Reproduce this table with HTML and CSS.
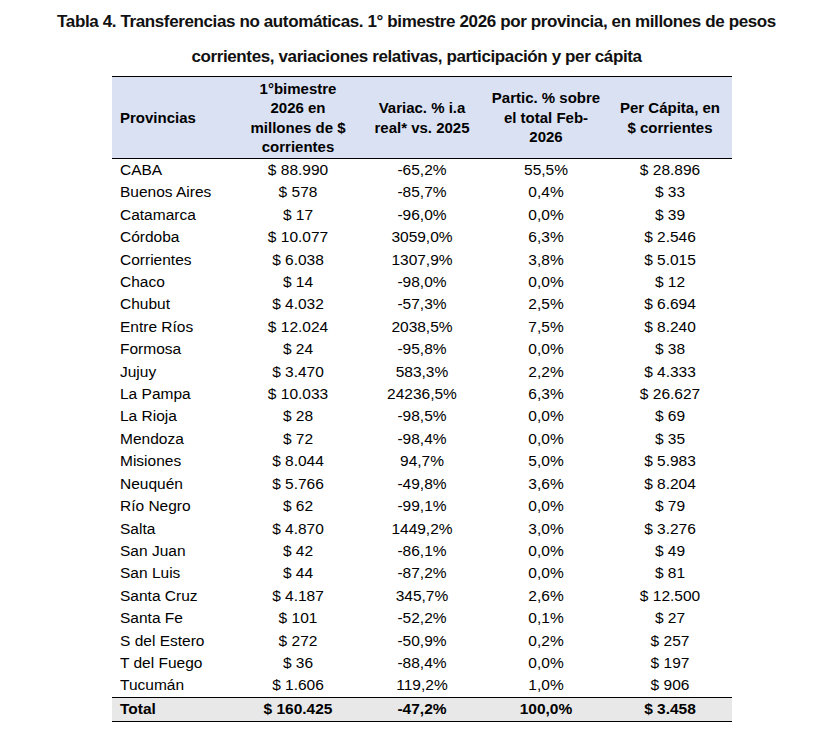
FILE: index.html
```html
<!DOCTYPE html>
<html lang="es">
<head>
<meta charset="utf-8">
<title>Tabla 4</title>
<link rel="stylesheet" href="styles.css">
</head>
<body>
<h1 class="title">Tabla 4. Transferencias no automáticas. 1° bimestre 2026 por provincia, en millones de pesos<br>corrientes, variaciones relativas, participación y per cápita</h1>
<table class="data">
<colgroup>
<col class="c-prov"><col><col><col><col>
</colgroup>
<thead>
<tr>
<th class="prov">Provincias</th>
<th>1°bimestre<br>2026 en<br>millones de $<br>corrientes</th>
<th>Variac. % i.a<br>real* vs. 2025</th>
<th>Partic. % sobre<br>el total Feb-<br>2026</th>
<th>Per Cápita, en<br>$ corrientes</th>
</tr>
</thead>
<tbody>
<tr><td class="prov">CABA</td><td>$ 88.990</td><td>-65,2%</td><td>55,5%</td><td>$ 28.896</td></tr>
<tr><td class="prov">Buenos Aires</td><td>$ 578</td><td>-85,7%</td><td>0,4%</td><td>$ 33</td></tr>
<tr><td class="prov">Catamarca</td><td>$ 17</td><td>-96,0%</td><td>0,0%</td><td>$ 39</td></tr>
<tr><td class="prov">Córdoba</td><td>$ 10.077</td><td>3059,0%</td><td>6,3%</td><td>$ 2.546</td></tr>
<tr><td class="prov">Corrientes</td><td>$ 6.038</td><td>1307,9%</td><td>3,8%</td><td>$ 5.015</td></tr>
<tr><td class="prov">Chaco</td><td>$ 14</td><td>-98,0%</td><td>0,0%</td><td>$ 12</td></tr>
<tr><td class="prov">Chubut</td><td>$ 4.032</td><td>-57,3%</td><td>2,5%</td><td>$ 6.694</td></tr>
<tr><td class="prov">Entre Ríos</td><td>$ 12.024</td><td>2038,5%</td><td>7,5%</td><td>$ 8.240</td></tr>
<tr><td class="prov">Formosa</td><td>$ 24</td><td>-95,8%</td><td>0,0%</td><td>$ 38</td></tr>
<tr><td class="prov">Jujuy</td><td>$ 3.470</td><td>583,3%</td><td>2,2%</td><td>$ 4.333</td></tr>
<tr><td class="prov">La Pampa</td><td>$ 10.033</td><td>24236,5%</td><td>6,3%</td><td>$ 26.627</td></tr>
<tr><td class="prov">La Rioja</td><td>$ 28</td><td>-98,5%</td><td>0,0%</td><td>$ 69</td></tr>
<tr><td class="prov">Mendoza</td><td>$ 72</td><td>-98,4%</td><td>0,0%</td><td>$ 35</td></tr>
<tr><td class="prov">Misiones</td><td>$ 8.044</td><td>94,7%</td><td>5,0%</td><td>$ 5.983</td></tr>
<tr><td class="prov">Neuquén</td><td>$ 5.766</td><td>-49,8%</td><td>3,6%</td><td>$ 8.204</td></tr>
<tr><td class="prov">Río Negro</td><td>$ 62</td><td>-99,1%</td><td>0,0%</td><td>$ 79</td></tr>
<tr><td class="prov">Salta</td><td>$ 4.870</td><td>1449,2%</td><td>3,0%</td><td>$ 3.276</td></tr>
<tr><td class="prov">San Juan</td><td>$ 42</td><td>-86,1%</td><td>0,0%</td><td>$ 49</td></tr>
<tr><td class="prov">San Luis</td><td>$ 44</td><td>-87,2%</td><td>0,0%</td><td>$ 81</td></tr>
<tr><td class="prov">Santa Cruz</td><td>$ 4.187</td><td>345,7%</td><td>2,6%</td><td>$ 12.500</td></tr>
<tr><td class="prov">Santa Fe</td><td>$ 101</td><td>-52,2%</td><td>0,1%</td><td>$ 27</td></tr>
<tr><td class="prov">S del Estero</td><td>$ 272</td><td>-50,9%</td><td>0,2%</td><td>$ 257</td></tr>
<tr><td class="prov">T del Fuego</td><td>$ 36</td><td>-88,4%</td><td>0,0%</td><td>$ 197</td></tr>
<tr><td class="prov">Tucumán</td><td>$ 1.606</td><td>119,2%</td><td>1,0%</td><td>$ 906</td></tr>
</tbody>
<tfoot>
<tr><td class="prov">Total</td><td>$ 160.425</td><td>-47,2%</td><td>100,0%</td><td>$ 3.458</td></tr>
</tfoot>
</table>
</body>
</html>
```
FILE: styles.css
```css
html, body {
  margin: 0;
  padding: 0;
  background: #ffffff;
}
body {
  font-family: "Liberation Sans", Arial, sans-serif;
  color: #000000;
}
.title {
  margin: 4px 0 0 0;
  font-family: "Liberation Sans", Arial, sans-serif;
  font-weight: bold;
  font-size: 17px;
  letter-spacing: -0.38px;
  line-height: 35px;
  text-align: center;
  color: #111111;
}
.data {
  margin: 2px 0 0 112px;
  width: 620px;
  border-collapse: collapse;
  table-layout: fixed;
  font-size: 15.5px;
}
.data col {
  width: 124px;
}
.data th, .data td {
  padding: 0;
  text-align: center;
  white-space: nowrap;
}
.data thead tr {
  background: #d9e1f2;
  border-top: 1px solid #000;
  border-bottom: 1.5px solid #000;
}
.data th {
  height: 81px;
  line-height: 19.5px;
  font-weight: bold;
  font-size: 15px;
  vertical-align: middle;
}
.data td {
  height: 22.4px;
  line-height: 22.4px;
}
.data .prov {
  text-align: left;
  padding-left: 8px;
}
.data tfoot tr {
  background: #e8e8e8;
  border-top: 1.5px solid #000;
  border-bottom: 1.5px solid #000;
  font-weight: bold;
}
.data tfoot td {
  height: 23px;
}
```
